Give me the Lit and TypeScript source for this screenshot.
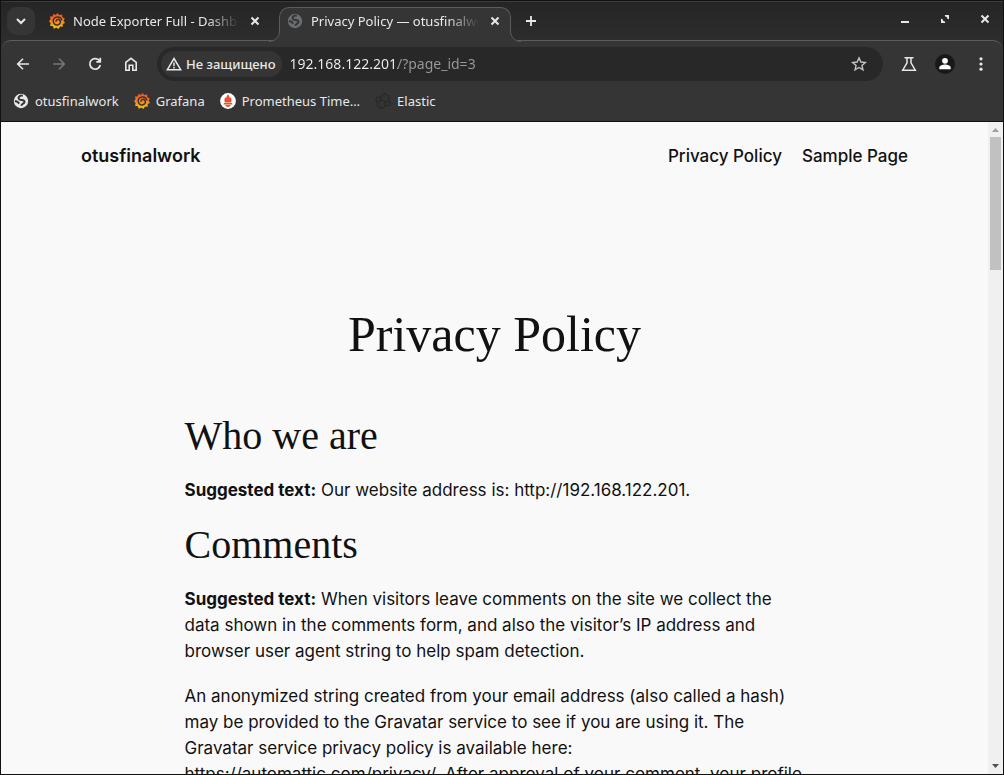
import { LitElement, html, svg, css } from "lit";
import { customElement, property } from "lit/decorators.js";

const glyphs: Record<string, unknown> = {
  down: svg`<path d="M4 6l4 4 4-4" fill="none" stroke="currentColor" stroke-width="2"/>`,
  close: svg`<path d="M4.500 4.500l7 7m0-7l-7 7" stroke="currentColor" stroke-width="2"/>`,
  plus: svg`<path d="M8 3v10M3 8h10" stroke="currentColor" stroke-width="1.800"/>`,
  back: svg`<path d="M14 8H3M8 2.700L2.700 8 8 13.300" fill="none" stroke="currentColor" stroke-width="1.600"/>`,
  forward: svg`<path d="M2 8h11M8 2.700L13.300 8 8 13.300" fill="none" stroke="currentColor" stroke-width="1.600"/>`,
  reload: svg`<path d="M12.600 5A5.300 5.300 0 1 0 13.300 9M13.300 1.800V5.800H9.300" fill="none" stroke="currentColor" stroke-width="1.700"/>`,
  home: svg`<path d="M2.800 6.300L8 2.300l5.200 4v7.900H9.800V9.300H6.200v4.900H2.800z" fill="none" stroke="currentColor" stroke-width="1.600"/>`,
  warning: svg`<path d="M8 2.500L14.700 13.700H1.300z" fill="none" stroke="currentColor" stroke-width="1.500"/><path d="M8 6.500v3.700M8 11v1.500" stroke="currentColor" stroke-width="1.500"/>`,
  star: svg`<path d="M8 1.900l1.850 4.100 4.500.45-3.400 3 1 4.400L8 11.500l-3.950 2.350 1-4.400-3.400-3 4.500-.45z" fill="none" stroke="currentColor" stroke-width="1.400"/>`,
  flask: svg`<path d="M3.500 1.800h9M6 2v4.800L1.700 14.200h12.600L10 6.800V2" fill="none" stroke="currentColor" stroke-width="1.500"/>`,
  more: svg`<g fill="currentColor"><circle cx="8" cy="2.800" r="1.600"/><circle cx="8" cy="8" r="1.600"/><circle cx="8" cy="13.200" r="1.600"/></g>`,
  minimize: svg`<path d="M4 11h8" stroke="currentColor" stroke-width="2"/>`,
  restore: svg`<path d="M7.500 4H12v4.500zM4 7.500V12h4.500z" fill="currentColor"/><path d="M8 4.800h3.200V8M4.800 8v3.200H8" fill="none" stroke="currentColor" stroke-width="1.600"/>`,
  person: svg`<circle cx="8" cy="4.300" r="3.300" fill="currentColor"/><path d="M1.500 14v-1.800C1.500 9.700 5.500 8.700 8 8.700s6.500 1 6.500 3.500V14z" fill="currentColor"/>`,
  globe: svg`<circle cx="8" cy="8" r="7.200" fill="currentColor"/><path d="M9.800 2.700C5.800 2 4.400 5.600 6.800 6.600c1.600.7 5.600.4 4.600 2.800-.6 1.500-2.400.9-3.200 3.300M2 8l2.600.8 1.600 1.900" fill="none" stroke="#353535" stroke-width="2"/>`,
  grafana: svg`<defs><linearGradient id="flame" x1="0" y1="0" x2="0" y2="1"><stop offset="0" stop-color="#f04e28"/><stop offset=".5" stop-color="#f58220"/><stop offset="1" stop-color="#fbca0a"/></linearGradient></defs>
    <path d="M8.600 0l1.600 2.100 3-.6.100 2.700 2.500 1.300-1.200 2.100 1.400 2.300-2.300 1.100.1 2.700-2.700-.1-1.800 2.400-1.900-1.600-2.600 1.300-.9-2.500-2.900-.4.700-2.500L0 8.100l1.700-1.800-.8-2.700 2.700-.2.900-2.600 2.200 1.100z" fill="url(#flame)"/>
    <path d="M12.900 7.400C12.300 5 10.400 3.800 8.300 3.900 5.700 4.100 4 6 4.200 8.300c.2 2.300 2 3.900 4.200 3.700 1.900-.2 3.200-1.700 3-3.400-.2-1.500-1.500-2.500-2.900-2.200-1.200.2-1.800 1.500-1.100 2.400" fill="none" stroke="#353535" stroke-width="1.500"/>`,
  prometheus: svg`<circle cx="8" cy="8" r="7.900" fill="#fff"/><path d="M8 1.500C9.700 3 9.200 4.300 10 5.200l.6-1.200c1.300 2.100 1.100 3.700.6 5.500H4.800C4.300 7.700 4.100 6.100 5.400 4l.6 1.200C6.800 4.300 6.300 3 8 1.500zM3.800 10h8.400v1.400H3.800zM5.200 12h5.600c-.8 2.500-4.800 2.500-5.600 0z" fill="#e6522c"/>`,
  elastic: svg`<g fill="#333" stroke="#262626"><circle cx="9.700" cy="5.300" r="4.400"/><circle cx="6.300" cy="11" r="4.200"/><circle cx="3.300" cy="6.500" r="2.500"/><circle cx="12.800" cy="10.500" r="2.500"/></g>`,
};

@customElement("ui-icon")
class UiIcon extends LitElement {
  @property() name = "globe";

  static styles = css`
    :host { display: block; flex: none; width: 16px; height: 16px; }
    .glyph { display: block; width: 100%; height: 100%; }
  `;

  render() {
    return html`<svg class="glyph" viewBox="0 0 16 16" aria-hidden="true">${glyphs[this.name]}</svg>`;
  }
}

@customElement("browser-tabs")
class BrowserTabs extends LitElement {
  static styles = css`
    :host { display: block; }
    button { border: 0; padding: 0; margin: 0; background: none; color: inherit; font: inherit; cursor: pointer; }
    .strip { display: flex; align-items: flex-start; height: 38px; padding: 0 10px 0 6px; color: #e8e8e8; }
    .search { display: grid; place-items: center; width: 28px; height: 28px; margin-top: 5px; border-radius: 9px; background: #353535; }
    .tab { position: relative; display: flex; align-items: center; box-sizing: border-box; height: 35px; margin-top: 5px; padding: 0 7px 8px; border: 1px solid transparent; border-bottom: 0; border-radius: 10px 10px 0 0; }
    .first { width: 230px; margin: 5px 8px 0 6px; }
    .active { width: 232px; background: #353535; border-color: #5c5c5c; z-index: 1; }
    .pick { display: flex; flex: 1; min-width: 0; align-items: center; gap: 8px; }
    .title { flex: 1; min-width: 0; overflow: hidden; white-space: nowrap; text-align: left; line-height: 20px; mask-image: linear-gradient(to right, #000 calc(100% - 32px), transparent); }
    .close { margin-left: 8px; }
    .fade { color: #6b6e72; }
    .foot { position: absolute; bottom: 0; width: 11px; height: 11px; }
    .left { left: -11px; }
    .right { right: -11px; }
    .new { margin: 11px 0 0 12px; }
    .controls { display: flex; gap: 24px; margin: 9px 0 0 auto; }
  `;

  render() {
    return html`
      <div class="strip">
        <button class="search" aria-label="Search tabs"><ui-icon name="down"></ui-icon></button>
        <div class="tab first">
          <button class="pick"><ui-icon name="grafana"></ui-icon><span class="title">Node Exporter Full - Dashboards</span></button>
          <button class="close" aria-label="Close tab"><ui-icon name="close"></ui-icon></button>
        </div>
        <div class="tab active">
          <svg class="foot left" viewBox="0 0 11 11"><path d="M10.500 0C10.500 6 6 10.500 0 10.500V11H11V0z" fill="#353535"/><path d="M10.500 0C10.500 6 6 10.500 0 10.500" fill="none" stroke="#5c5c5c"/></svg>
          <button class="pick"><ui-icon class="fade" name="globe"></ui-icon><span class="title">Privacy Policy — otusfinalwork</span></button>
          <button class="close" aria-label="Close tab"><ui-icon name="close"></ui-icon></button>
          <svg class="foot right" viewBox="0 0 11 11"><path d="M.5 0C.5 6 5 10.500 11 10.500V11H0V0z" fill="#353535"/><path d="M.5 0C.5 6 5 10.500 11 10.500" fill="none" stroke="#5c5c5c"/></svg>
        </div>
        <button class="new" aria-label="New tab"><ui-icon name="plus"></ui-icon></button>
        <div class="controls">
          <button aria-label="Minimize"><ui-icon name="minimize"></ui-icon></button>
          <button aria-label="Restore"><ui-icon name="restore"></ui-icon></button>
          <button aria-label="Close window"><ui-icon name="close"></ui-icon></button>
        </div>
      </div>
    `;
  }
}

@customElement("browser-toolbar")
class BrowserToolbar extends LitElement {
  static styles = css`
    :host { display: block; }
    button { display: block; border: 0; padding: 0; margin: 0; background: none; color: inherit; font: inherit; cursor: pointer; }
    .panel { height: 80px; border-top: 1px solid #5c5c5c; border-radius: 10px 10px 0 0; background: #353535; color: #e8e8e8; }
    .row { display: flex; align-items: center; height: 34px; padding: 6px 14px; }
    .nav { display: flex; gap: 20px; margin-right: 18px; }
    .off { color: #777; }
    .omnibox { display: flex; flex: 1; align-items: center; box-sizing: border-box; height: 34px; padding: 0 16px 0 4px; border-radius: 17px; background: #282828; }
    .chip { display: flex; align-items: center; gap: 4px; height: 26px; padding: 0 6px 0 5px; border-radius: 13px; background: #353535; font-weight: 500; }
    .url { flex: 1; min-width: 0; height: 24px; margin: 0 8px; padding: 0; border: 0; outline: 0; font: 14px/24px "Noto Sans", sans-serif; color: transparent; background: linear-gradient(to right, #f2f2f2 108px, #9a9a9a 108px); background-clip: text; -webkit-background-clip: text; }
    .star { color: #c4c4c4; }
    .tools { display: flex; align-items: center; gap: 18px; margin-left: 18px; }
    .avatar { display: grid; place-items: center; width: 20px; height: 20px; border-radius: 50%; background: #181818; color: #fff; }
    .avatar ui-icon { width: 14px; height: 14px; }
    .marks { display: flex; gap: 15px; padding: 4px 12px; }
    .mark { display: flex; align-items: center; gap: 6px; color: inherit; text-decoration: none; line-height: 20px; }
  `;

  private bookmarks = [
    { icon: "globe", label: "otusfinalwork" },
    { icon: "grafana", label: "Grafana" },
    { icon: "prometheus", label: "Prometheus Time…" },
    { icon: "elastic", label: "Elastic" },
  ];

  render() {
    return html`
      <div class="panel">
        <div class="row">
          <div class="nav">
            <button aria-label="Back"><ui-icon name="back"></ui-icon></button>
            <button class="off" aria-label="Forward"><ui-icon name="forward"></ui-icon></button>
            <button aria-label="Reload"><ui-icon name="reload"></ui-icon></button>
            <button aria-label="Home"><ui-icon name="home"></ui-icon></button>
          </div>
          <div class="omnibox">
            <button class="chip"><ui-icon name="warning"></ui-icon><span>Не защищено</span></button>
            <input class="url" type="text" aria-label="Address" .value=${"192.168.122.201/?page_id=3"} />
            <button class="star" aria-label="Bookmark this page"><ui-icon name="star"></ui-icon></button>
          </div>
          <div class="tools">
            <button aria-label="Labs"><ui-icon name="flask"></ui-icon></button>
            <button class="avatar" aria-label="Profile"><ui-icon name="person"></ui-icon></button>
            <button aria-label="Menu"><ui-icon name="more"></ui-icon></button>
          </div>
        </div>
        <nav class="marks">
          ${this.bookmarks.map((b) => html`<a class="mark" href="#"><ui-icon name=${b.icon}></ui-icon><span>${b.label}</span></a>`)}
        </nav>
      </div>
    `;
  }
}

@customElement("policy-page")
class PolicyPage extends LitElement {
  static styles = css`
    :host { display: block; min-width: 0; overflow: hidden; background: #f9f9f9; color: #111; font: 17px/26px Inter, sans-serif; }
    .top { display: flex; align-items: center; justify-content: space-between; padding: 21px 80px; font-weight: 500; }
    .top a { color: inherit; text-decoration: none; }
    .top .site { font-size: 18px; font-weight: 600; }
    .links { display: flex; gap: 20px; }
    .body { max-width: 620px; margin: 0 auto; padding-top: 114px; }
    h1, h2 { margin: 0; font-family: "Liberation Serif", serif; font-weight: 400; }
    h1 { margin-bottom: 49px; font-size: 50px; line-height: 60px; text-align: center; }
    h2 { margin-bottom: 19px; font-size: 40px; line-height: 45px; }
    p { margin: 0 0 19px; }
  `;

  render() {
    return html`
      <header class="top">
        <a class="site" href="#">otusfinalwork</a>
        <nav class="links"><a href="#">Privacy Policy</a><a href="#">Sample Page</a></nav>
      </header>
      <main class="body">
        <h1>Privacy Policy</h1>
        <h2>Who we are</h2>
        <p><strong>Suggested text:</strong> Our website address is: http://192.168.122.201.</p>
        <h2>Comments</h2>
        <p><strong>Suggested text:</strong> When visitors leave comments on the site we collect the data shown in the comments form, and also the visitor’s IP address and browser user agent string to help spam detection.</p>
        <p>An anonymized string created from your email address (also called a hash) may be provided to the Gravatar service to see if you are using it. The Gravatar service privacy policy is available here: https://automattic.com/privacy/. After approval of your comment, your profile</p>
      </main>
    `;
  }
}

@customElement("app-root")
class AppRoot extends LitElement {
  static styles = css`
    :host { display: flex; flex-direction: column; box-sizing: border-box; height: 100vh; overflow: hidden; border: 1px solid #111; background: linear-gradient(#252525, #2d2d2d 40px); font: 13px/20px "Noto Sans", sans-serif; }
    .tabs { border-top: 1px solid #3b3b3b; }
    .view { display: grid; grid-template-columns: minmax(0, 1fr) 15px; flex: 1; min-height: 0; border-top: 1px solid #111; }
    .scroll { display: flex; flex-direction: column; align-items: center; background: #f0f0f0; }
    .arrow { display: block; width: 15px; height: 15px; }
    .track { flex: 1; }
    .thumb { width: 11px; height: 22%; max-height: 133px; background: #c1c1c1; }
  `;

  render() {
    return html`
      <browser-tabs class="tabs"></browser-tabs>
      <browser-toolbar></browser-toolbar>
      <div class="view">
        <policy-page></policy-page>
        <div class="scroll">
          <svg class="arrow" viewBox="0 0 15 15"><path d="M4 10l3.500-4 3.500 4z" fill="#a0a0a0"/></svg>
          <div class="thumb"></div>
          <div class="track"></div>
          <svg class="arrow" viewBox="0 0 15 15"><path d="M4 5l3.500 4L11 5z" fill="#505050"/></svg>
        </div>
      </div>
    `;
  }
}
